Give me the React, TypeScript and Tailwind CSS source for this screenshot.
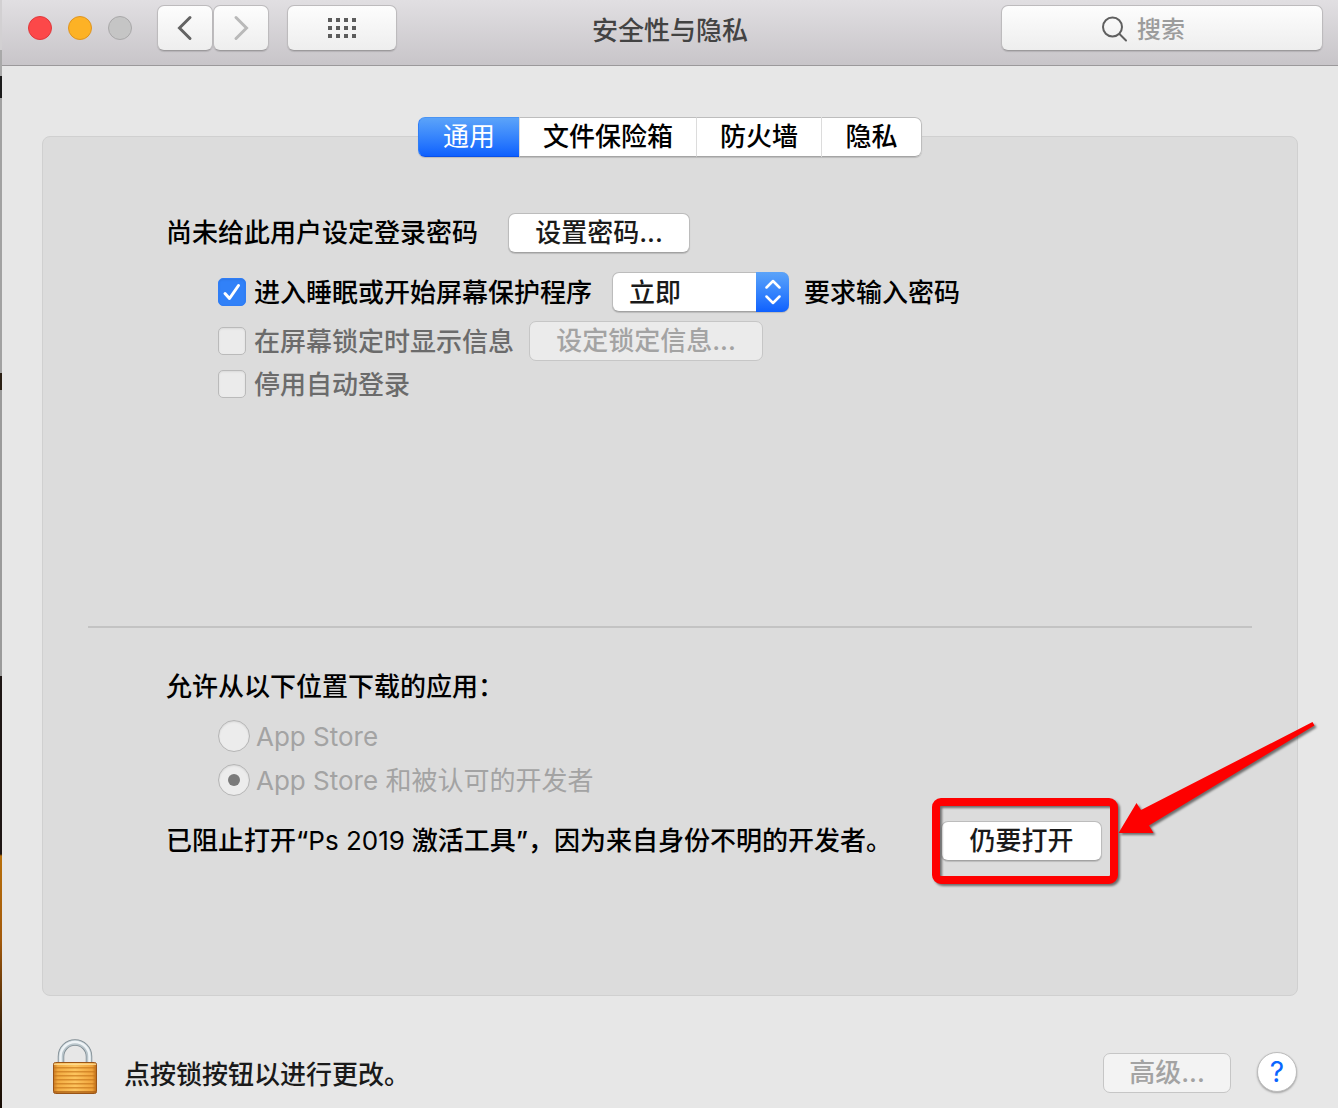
import { useState } from 'react';
import type { ReactNode } from 'react';

const tabs = ['通用', '文件保险箱', '防火墙', '隐私'];

const toolbarButton =
  'flex h-[46px] items-center justify-center rounded-[7px] border border-[#bdbbbd] border-b-[#9c9a9c] bg-linear-to-b from-[#fdfdfd] to-[#eeeeee] shadow-[0_1px_1px_rgba(0,0,0,0.12)]';

interface PushButtonProps {
  children: ReactNode;
  disabled?: boolean;
  className?: string;
}

function PushButton({ children, disabled, className = '' }: PushButtonProps) {
  const look = disabled
    ? 'border-[#c6c6c6] text-[#a3a3a3]'
    : 'border-[#bcbcbc] border-b-[#a2a2a2] bg-white text-[#1a1a1a] shadow-[0_1px_1px_rgba(0,0,0,0.15)]';
  return (
    <button
      type="button"
      disabled={disabled}
      className={`flex h-10 items-center justify-center rounded-[7px] border whitespace-nowrap ${look} ${className}`}
    >
      {children}
    </button>
  );
}

interface OptionProps {
  id: string;
  label: string;
  checked?: boolean;
  disabled?: boolean;
}

function CheckOption({ id, label, checked, disabled }: OptionProps) {
  return (
    <div className="flex items-center gap-2">
      <span className="grid size-7">
        <input
          id={id}
          type="checkbox"
          defaultChecked={checked}
          disabled={disabled}
          className="peer col-start-1 row-start-1 size-7 appearance-none rounded-[5px] border border-[#bababa] bg-[#ebebeb] shadow-[inset_0_1px_2px_rgba(0,0,0,0.08)] checked:border-[#2f7df6] checked:bg-[#3181f8]"
        />
        <svg
          viewBox="0 0 28 28"
          className="pointer-events-none invisible col-start-1 row-start-1 size-7 peer-checked:visible"
          fill="none"
          stroke="white"
          strokeWidth="3"
          strokeLinecap="round"
          strokeLinejoin="round"
        >
          <path d="M7 15.500 11.500 20.500 20.500 7.500" />
        </svg>
      </span>
      <label htmlFor={id} className={`pt-0.5 leading-[38px] ${disabled ? 'text-[#6b6b6b]' : 'text-black'}`}>
        {label}
      </label>
    </div>
  );
}

function RadioOption({ id, label, checked, disabled }: OptionProps) {
  return (
    <div className="flex h-11 items-center gap-1.5">
      <span className="grid size-8 place-items-center">
        <input
          id={id}
          type="radio"
          name="source"
          defaultChecked={checked}
          disabled={disabled}
          className="peer col-start-1 row-start-1 size-8 appearance-none rounded-full border border-[#b5b5b5] bg-[#ececec] shadow-[inset_0_1px_2px_rgba(0,0,0,0.1)]"
        />
        <span className="pointer-events-none invisible col-start-1 row-start-1 size-3 rounded-full bg-[#7a7a7a] peer-checked:visible" />
      </span>
      <label htmlFor={id} className="pt-0.5 leading-[38px] text-[#a3a3a3]">
        {label}
      </label>
    </div>
  );
}

function PadlockIcon() {
  return (
    <svg viewBox="0 0 44 56" className="h-14 w-11">
      <defs>
        <linearGradient id="brass" x1="0" x2="1" y1="0" y2="0">
          <stop offset="0" stopColor="#c87a24" />
          <stop offset="0.1" stopColor="#f2ac42" />
          <stop offset="0.5" stopColor="#fdc55e" />
          <stop offset="0.9" stopColor="#f0a43c" />
          <stop offset="1" stopColor="#b96a18" />
        </linearGradient>
      </defs>
      <path d="M8 25V17.500a14 14 0 0 1 28 0V25" fill="none" stroke="#7f8b92" strokeWidth="6.500" />
      <path d="M8 25V17.500a14 14 0 0 1 28 0V25" fill="none" stroke="#b9c5cb" strokeWidth="5" />
      <path d="M7.500 25V17.500a14.500 14.500 0 0 1 29 0V25" fill="none" stroke="#eef3f6" strokeWidth="2.500" />
      <rect x="0.5" y="23.500" width="43" height="31" rx="2" fill="url(#brass)" stroke="#9a5416" />
      {[28, 32, 36, 40, 44, 48].map((y) => (
        <rect key={y} x="1" y={y} width="42" height="1.5" fill="#c9771c" opacity="0.7" />
      ))}
      <rect x="1" y="24.500" width="42" height="1.5" fill="#ffe09a" opacity="0.8" />
      <rect x="1" y="52" width="42" height="2" fill="#a85c14" opacity="0.7" />
    </svg>
  );
}

function Toolbar() {
  return (
    <header className="grid h-[66px] grid-cols-[1fr_auto_1fr] items-start border-b border-[#9b999b] bg-linear-to-b from-[#e1dfe2] to-[#c8c5c9] px-[15px] pt-[5px]">
      <div className="flex items-center pl-[11px]">
        <div className="flex gap-4">
          <button type="button" aria-label="关闭" className="size-6 rounded-full border border-[#e0383c] bg-[#fc4849]" />
          <button type="button" aria-label="最小化" className="size-6 rounded-full border border-[#df9420] bg-[#fdb225]" />
          <button type="button" aria-label="缩放" disabled className="size-6 rounded-full border border-[#a9a8a9] bg-[#c5c5c5]" />
        </div>
        <div className="ml-[25px] flex">
          <button type="button" aria-label="后退" className={`${toolbarButton} w-14`}>
            <svg viewBox="0 0 16 26" className="h-[26px] w-4" fill="none" stroke="#636363" strokeWidth="3" strokeLinecap="round">
              <path d="M13 2.500 2.500 13 13 23.500" />
            </svg>
          </button>
          <button type="button" aria-label="前进" disabled className={`${toolbarButton} w-14`}>
            <svg viewBox="0 0 16 26" className="h-[26px] w-4" fill="none" stroke="#b9b9b9" strokeWidth="3" strokeLinecap="round">
              <path d="M3 2.500 13.500 13 3 23.500" />
            </svg>
          </button>
        </div>
        <button type="button" aria-label="显示全部" className={`${toolbarButton} ml-[18px] w-[110px]`}>
          <svg viewBox="0 0 28 20" className="h-5 w-7" fill="#5c5c5c">
            {[0, 8, 16].map((y) => [0, 8, 16, 24].map((x) => <rect key={`${x}-${y}`} x={x} y={y} width="4" height="4" />))}
          </svg>
        </button>
      </div>
      <h1 className="flex h-[52px] items-center font-medium text-[#434343]">安全性与隐私</h1>
      <label className={`${toolbarButton} w-[322px] gap-2 justify-self-end pl-[99px] text-2xl`}>
        <svg viewBox="0 0 28 28" className="size-7 shrink-0" fill="none" stroke="#5f5f5f" strokeWidth="2" strokeLinecap="round">
          <circle cx="11.500" cy="13" r="9.500" />
          <path d="m18.500 20 6.500 6.500" />
        </svg>
        <input
          type="text"
          aria-label="搜索"
          placeholder="搜索"
          className="w-full min-w-0 flex-1 bg-transparent pt-1 font-medium outline-none placeholder:text-[#9c9c9c]"
        />
      </label>
    </header>
  );
}

function OpenAnyway() {
  return (
    <div className="relative">
      <PushButton className="w-[161px]">仍要打开</PushButton>
      <svg
        viewBox="0 0 390 170"
        className="pointer-events-none absolute -top-[101px] -left-[11px] h-[170px] w-[390px] max-w-none drop-shadow-[2px_2px_1px_rgba(0,0,0,0.5)]"
      >
        <rect x="6" y="82" width="178" height="78" rx="5" fill="none" stroke="#fe0000" strokeWidth="8" />
        <path d="M188.500 113 206.500 83l4.500 7L382.500 2l2 3.500L219 105.500l4.500 7.500Z" fill="#fe0000" />
      </svg>
    </div>
  );
}

export default function App() {
  const [active, setActive] = useState(tabs[0]);

  return (
    <div className="flex min-h-screen overflow-hidden bg-[#e7e7e7] font-[Inter,'Noto_Sans_CJK_SC',sans-serif] text-[26px] leading-10 text-black">
      {/* sliver of the desktop behind the window */}
      <div className="w-[2px] shrink-0 bg-[linear-gradient(#d2d0d2_0_50px,#a9a9a9_50px_76px,#1c1c1c_76px_98px,#a2a2a2_98px_373px,#2b2014_373px_390px,#9b9b9b_390px_676px,#1e1614_676px_854px,#b8700c_856px,#a35a0c_940px,#3a2108_1030px,#170d06_1108px)]" />
      <div className="flex min-w-0 flex-1 flex-col">
        <Toolbar />

        <main className="flex flex-1 flex-col px-10 pt-[51px]">
          <div
            role="tablist"
            className="z-10 -mb-[21px] flex self-center rounded-[7px] bg-white font-medium shadow-[0_1px_1px_rgba(0,0,0,0.15)]"
          >
            {tabs.map((tab) => (
              <button
                key={tab}
                type="button"
                role="tab"
                aria-selected={tab === active}
                onClick={() => setActive(tab)}
                className={`flex h-10 min-w-[101px] items-center justify-center border-y border-l px-[23px] first:rounded-l-[7px] last:rounded-r-[7px] last:border-r ${
                  tab === active
                    ? 'border-t-[#4a94f3] border-r-[#2f7df6] border-b-[#0a50e8] border-l-[#2f7df6] bg-linear-to-b from-[#5ba3f9] to-[#0e60fe] font-normal text-white'
                    : 'border-t-[#bdbdbd] border-r-[#bdbdbd] border-b-[#a5a5a5] border-l-[#dcdcdc]'
                }`}
              >
                {tab}
              </button>
            ))}
          </div>

          <section className="flex flex-1 flex-col rounded-[8px] border border-[#d0d0d0] bg-[#dcdcdc] px-[45px]">
            <div className="flex-1 pt-[76px] pl-[78px] font-medium">
              <div className="flex items-center gap-[30px]">
                <span>尚未给此用户设定登录密码</span>
                <PushButton className="w-[182px]">设置密码...</PushButton>
              </div>
              <div className="mt-[19px] ml-[52px] flex items-center">
                <CheckOption id="require-password" label="进入睡眠或开始屏幕保护程序" checked />
                <div className="ml-5 grid h-10 w-[177px]">
                  <select
                    aria-label="要求输入密码的时间"
                    className="col-start-1 row-start-1 h-10 appearance-none rounded-[7px] border border-[#bcbcbc] border-b-[#a2a2a2] bg-white pl-4 text-[#1a1a1a] shadow-[0_1px_1px_rgba(0,0,0,0.15)]"
                  >
                    <option>立即</option>
                  </select>
                  <span className="pointer-events-none col-start-1 row-start-1 flex w-[33px] items-center justify-center justify-self-end rounded-r-[7px] bg-linear-to-b from-[#5ba3f9] to-[#0e60fe]">
                    <svg viewBox="0 0 16 26" className="h-[26px] w-4" fill="none" stroke="white" strokeWidth="2.500" strokeLinecap="round" strokeLinejoin="round">
                      <path d="M1.500 8.500 8 2l6.500 6.500M1.500 17.500 8 24l6.500-6.500" />
                    </svg>
                  </span>
                </div>
                <span className="ml-[15px] pt-0.5 leading-[38px]">要求输入密码</span>
              </div>
              <div className="mt-[9px] ml-[52px] flex items-center gap-[15px]">
                <CheckOption id="lock-message" label="在屏幕锁定时显示信息" disabled />
                <PushButton disabled className="w-[234px] bg-[#ebebeb]">
                  设定锁定信息...
                </PushButton>
              </div>
              <div className="mt-[3px] ml-[52px]">
                <CheckOption id="disable-auto-login" label="停用自动登录" disabled />
              </div>
            </div>

            <div className="border-t-2 border-[#c3c3c3] pt-[39px] pb-[134px] pl-[78px]">
              <p className="font-medium">允许从以下位置下载的应用：</p>
              <div className="mt-[7px] ml-[52px]">
                <RadioOption id="app-store" label="App Store" disabled />
                <RadioOption id="app-store-developers" label="App Store 和被认可的开发者" checked disabled />
              </div>
              <div className="mt-[19px] flex items-center justify-between pr-[150px] font-medium">
                <p className="whitespace-nowrap">
                  已阻止打开“<span className="font-normal">Ps 2019</span> 激活工具”，因为来自身份不明的开发者。
                </p>
                <OpenAnyway />
              </div>
            </div>
          </section>
        </main>

        <footer className="flex items-end pt-[43px] pr-[41px] pb-[13px] pl-[51px] font-medium">
          <button type="button" aria-label="点按锁按钮以进行更改">
            <PadlockIcon />
          </button>
          <span className="ml-[27px] text-[#1a1a1a]">点按锁按钮以进行更改。</span>
          <PushButton disabled className="mb-[2px] ml-auto w-32 bg-[#f3f3f3]">
            高级...
          </PushButton>
          <button
            type="button"
            aria-label="帮助"
            className="mb-[3px] ml-[26px] flex size-10 items-center justify-center rounded-full border border-[#bcbcbc] bg-white text-[28px] font-normal text-[#0a66ff] shadow-[0_1px_2px_rgba(0,0,0,0.3)]"
          >
            ?
          </button>
        </footer>
      </div>
    </div>
  );
}
